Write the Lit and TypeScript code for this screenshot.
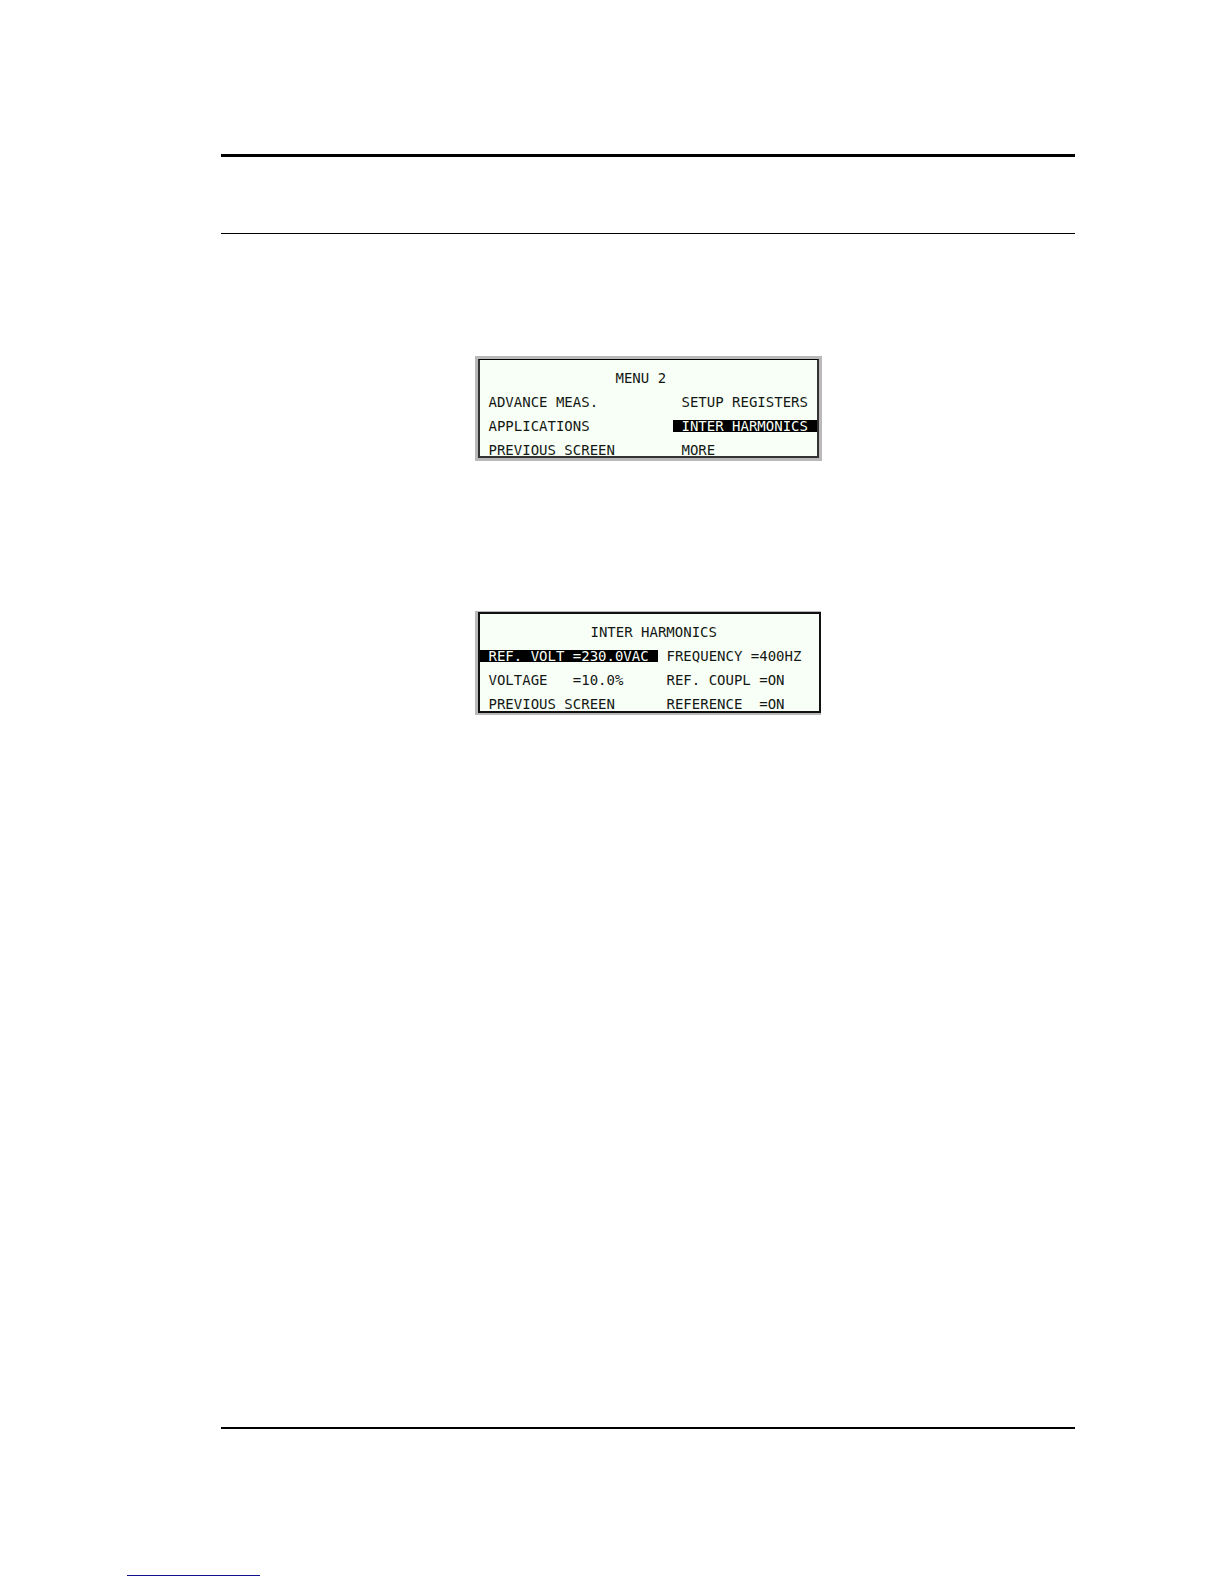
import { LitElement, html, css } from "lit";
import { customElement, property } from "lit/decorators.js";
import { classMap } from "lit/directives/class-map.js";

interface Item {
  label: string;
  selected?: boolean;
}

@customElement("lcd-screen")
class LcdScreen extends LitElement {
  @property() heading = "";
  @property() variant = "menu";
  @property({ attribute: false }) items: Item[] = [];

  static styles = css`
    :host {
      display: block;
    }
    .bezel {
      box-sizing: border-box;
      background: #bab8b9;
      font: 14px/12px "DejaVu Sans Mono", "Liberation Mono", monospace;
      color: #141814;
    }
    .menu {
      padding: 3px;
    }
    .settings {
      padding: 1px 0 2px 3px;
      margin-right: 1px;
    }
    .glass {
      border: 1px solid #000;
      border-left: 2px solid #333;
      background: #f8fff7;
      padding-top: 12px;
    }
    .menu .glass {
      border-right: 2px solid #333;
      border-bottom: 2px solid #333;
    }
    .settings .glass {
      border: 2px solid #111;
      padding-bottom: 1px;
    }
    .title {
      margin: 0 0 12px;
      font: inherit;
      white-space: pre;
      padding-left: 136px;
    }
    .settings .title {
      padding-left: 111px;
    }
    .grid {
      display: grid;
      grid-template-columns: 1fr 144px;
      row-gap: 12px;
      column-gap: 16px;
    }
    .settings .grid {
      grid-template-columns: 178px 1fr;
      column-gap: 0;
    }
    .item {
      appearance: none;
      border: 0;
      margin: 0;
      padding: 0 0 0 9px;
      height: 12px;
      background: none;
      color: inherit;
      font: inherit;
      text-align: left;
      white-space: pre;
      overflow: visible;
      cursor: pointer;
    }
    .selected {
      background: #000;
      color: #f8fff7;
    }
  `;

  render() {
    return html`
      <section class=${classMap({ bezel: true, [this.variant]: true })}>
        <div class="glass">
          <h2 class="title">${this.heading}</h2>
          <div class="grid">
            ${this.items.map(
              (item) => html`<button
                type="button"
                class=${classMap({ item: true, selected: !!item.selected })}
              >${item.label}</button>`
            )}
          </div>
        </div>
      </section>
    `;
  }
}

@customElement("app-root")
class AppRoot extends LitElement {
  static styles = css`
    :host {
      display: block;
    }
    .page {
      box-sizing: border-box;
      min-height: 100vh;
      display: flex;
      flex-direction: column;
      padding: 154px 149px 8px 221px;
      background: #fff;
    }
    .header {
      height: 76px;
      border-top: 3px solid #000;
      border-bottom: 1px solid #000;
    }
    .main {
      flex: 1;
      display: flex;
      flex-direction: column;
      align-items: center;
      gap: 150px;
      padding-top: 122px;
    }
    .screen {
      width: 347px;
    }
    .footer {
      height: 146px;
      border-top: 2px solid #000;
    }
    .link {
      width: 133px;
      margin-left: -94px;
      border-top: 1px solid #10108a;
    }
  `;

  private menu: Item[] = [
    { label: "ADVANCE MEAS." },
    { label: "SETUP REGISTERS" },
    { label: "APPLICATIONS" },
    { label: "INTER HARMONICS", selected: true },
    { label: "PREVIOUS SCREEN" },
    { label: "MORE" },
  ];

  private settings: Item[] = [
    { label: "REF. VOLT =230.0VAC", selected: true },
    { label: "FREQUENCY =400HZ" },
    { label: "VOLTAGE   =10.0%" },
    { label: "REF. COUPL =ON" },
    { label: "PREVIOUS SCREEN" },
    { label: "REFERENCE  =ON" },
  ];

  render() {
    return html`
      <div class="page">
        <header class="header"></header>
        <main class="main">
          <lcd-screen class="screen" variant="menu" heading="MENU 2" .items=${this.menu}></lcd-screen>
          <lcd-screen class="screen" variant="settings" heading="INTER HARMONICS" .items=${this.settings}></lcd-screen>
        </main>
        <footer class="footer"></footer>
        <div class="link"></div>
      </div>
    `;
  }
}
